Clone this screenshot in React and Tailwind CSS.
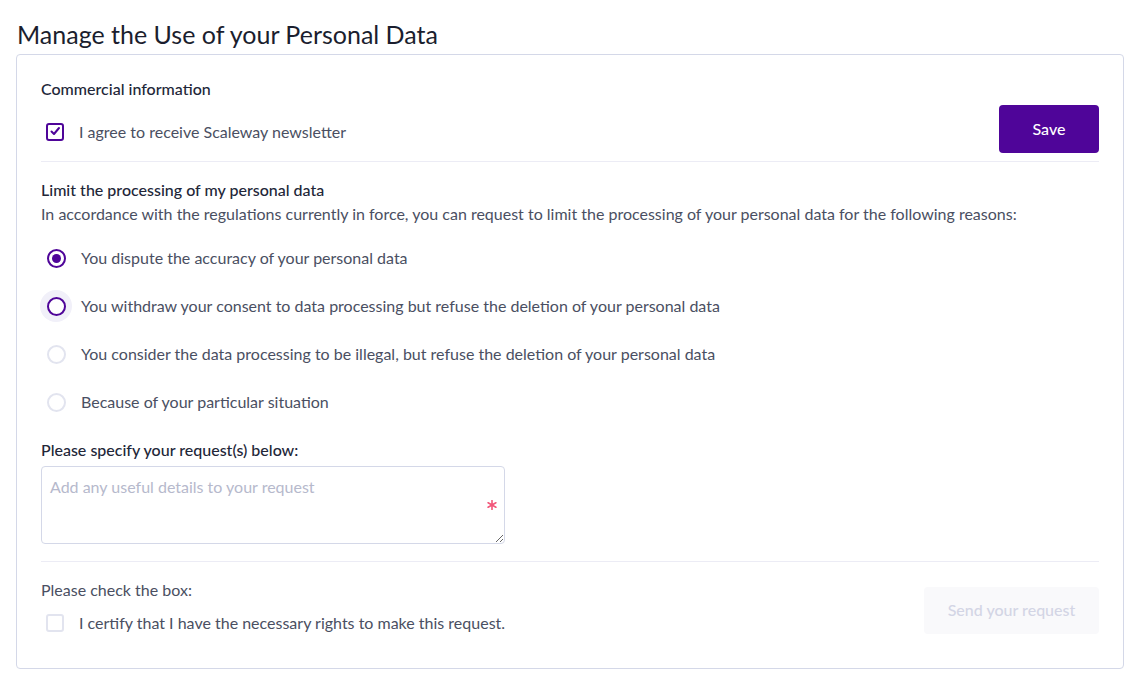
import React, { useState } from "react";

const font = { fontFamily: "Lato, 'Noto Sans', sans-serif" };

function Radio({ checked, hover, label }) {
    return (
        <label className="flex h-12 items-center">
            <span className="flex h-8 w-8 items-center justify-center">
                <span className={`flex h-8 w-8 items-center justify-center rounded-full ${hover ? "bg-[#f1f0f9]" : ""}`}>
                    <span
                        className={`flex h-[19px] w-[19px] items-center justify-center rounded-full border-2 bg-white ${
                            checked || hover ? "border-[#4f0599]" : "border-[#e2e4ef]"
                        }`}
                    >
                        {checked && <span className="h-[9px] w-[9px] rounded-full bg-[#4f0599]" />}
                    </span>
                </span>
            </span>
            <span className="ml-[9px] text-[16px] text-[#4a4f62]">{label}</span>
        </label>
    );
}

function Checkbox({ checked, label }) {
    return (
        <label className="flex items-center">
            <span className="flex h-8 w-8 items-center justify-center">
                {checked ? (
                    <svg width="20" height="20" viewBox="0 0 20 20" fill="none">
                        <rect x="2" y="2" width="16" height="16" rx="2" stroke="#4f0599" strokeWidth="2" />
                        <path d="M6.5 9.5l2.5 2.5 5-6" stroke="#4f0599" strokeWidth="2" strokeLinecap="round" strokeLinejoin="round" />
                    </svg>
                ) : (
                    <span className="h-[18px] w-[18px] rounded-[3px] border-2 border-[#e2e4ef] bg-white" />
                )}
            </span>
            <span className="ml-[8px] text-[16px] text-[#4a4f62]">{label}</span>
        </label>
    );
}

export default function App() {
    const [details, setDetails] = useState("");

    return (
        <div className="min-h-screen bg-white px-4 pt-[18px]" style={font}>
            <h1 className="pl-px text-[25px] leading-[32px] text-[#1b1e2e]">Manage the Use of your Personal Data</h1>

            <div className="mt-[4px] w-[1108px] rounded-[4px] border border-[#d4d8e8] px-6 pt-[22px] pb-[29px]">
                <section>
                    <h2 className="text-[16px] font-medium leading-6 text-[#222638]">Commercial information</h2>
                    <div className="mt-[4px] flex items-center justify-between">
                        <div className="-ml-[2px] pt-[6px]">
                            <Checkbox checked label="I agree to receive Scaleway newsletter" />
                        </div>
                        <button className="h-12 w-[100px] rounded-[4px] bg-[#4f0599] text-[16px] font-medium text-white">
                            Save
                        </button>
                    </div>
                </section>

                <hr className="mt-2 border-[#ececf5]" />

                <section className="pt-[16px]">
                    <h2 className="text-[16px] font-medium leading-6 text-[#222638]">Limit the processing of my personal data</h2>
                    <p className="text-[16px] leading-6 text-[#4a4f62]">
                        In accordance with the regulations currently in force, you can request to limit the processing of your personal data for the following reasons:
                    </p>
                    <div className="-ml-[1px] mt-[8px] flex flex-col">
                        <Radio checked label="You dispute the accuracy of your personal data" />
                        <Radio hover label="You withdraw your consent to data processing but refuse the deletion of your personal data" />
                        <Radio label="You consider the data processing to be illegal, but refuse the deletion of your personal data" />
                        <Radio label="Because of your particular situation" />
                    </div>

                    <h2 className="mt-[12px] text-[16px] font-medium leading-6 text-[#222638]">Please specify your request(s) below:</h2>
                    <div className="relative mt-[4px] w-[464px]">
                        <textarea
                            value={details}
                            onChange={(e) => setDetails(e.target.value)}
                            placeholder="Add any useful details to your request"
                            className="block h-[78px] w-full resize-y rounded-[4px] border border-[#d4d8e8] px-2 pt-[10px] pb-2 text-[16px] leading-5 text-[#4a4f62] outline-none placeholder:text-[#b6b9cc]"
                        />
                        <svg className="absolute right-[8px] top-[34px]" width="10" height="10" viewBox="0 0 10 10" aria-hidden="true">
                            <path d="M5 0.5v9M1.1 2.75l7.8 4.5M1.1 7.25l7.8-4.5" stroke="#f2577a" strokeWidth="1.6" strokeLinecap="round" />
                        </svg>
                    </div>
                </section>

                <hr className="mt-[17px] border-[#ececf5]" />

                <section className="flex items-center justify-between pt-[16px]">
                    <div>
                        <p className="text-[16px] leading-6 text-[#4a4f62]">Please check the box:</p>
                        <div className="-ml-[2px] mt-[5px]">
                            <Checkbox label="I certify that I have the necessary rights to make this request." />
                        </div>
                    </div>
                    <button disabled className="mt-[3px] h-[47px] w-[175px] rounded-[4px] bg-[#f9f9fb] text-[16px] font-medium text-[#d3d5e5]">
                        Send your request
                    </button>
                </section>
            </div>
        </div>
    );
}
